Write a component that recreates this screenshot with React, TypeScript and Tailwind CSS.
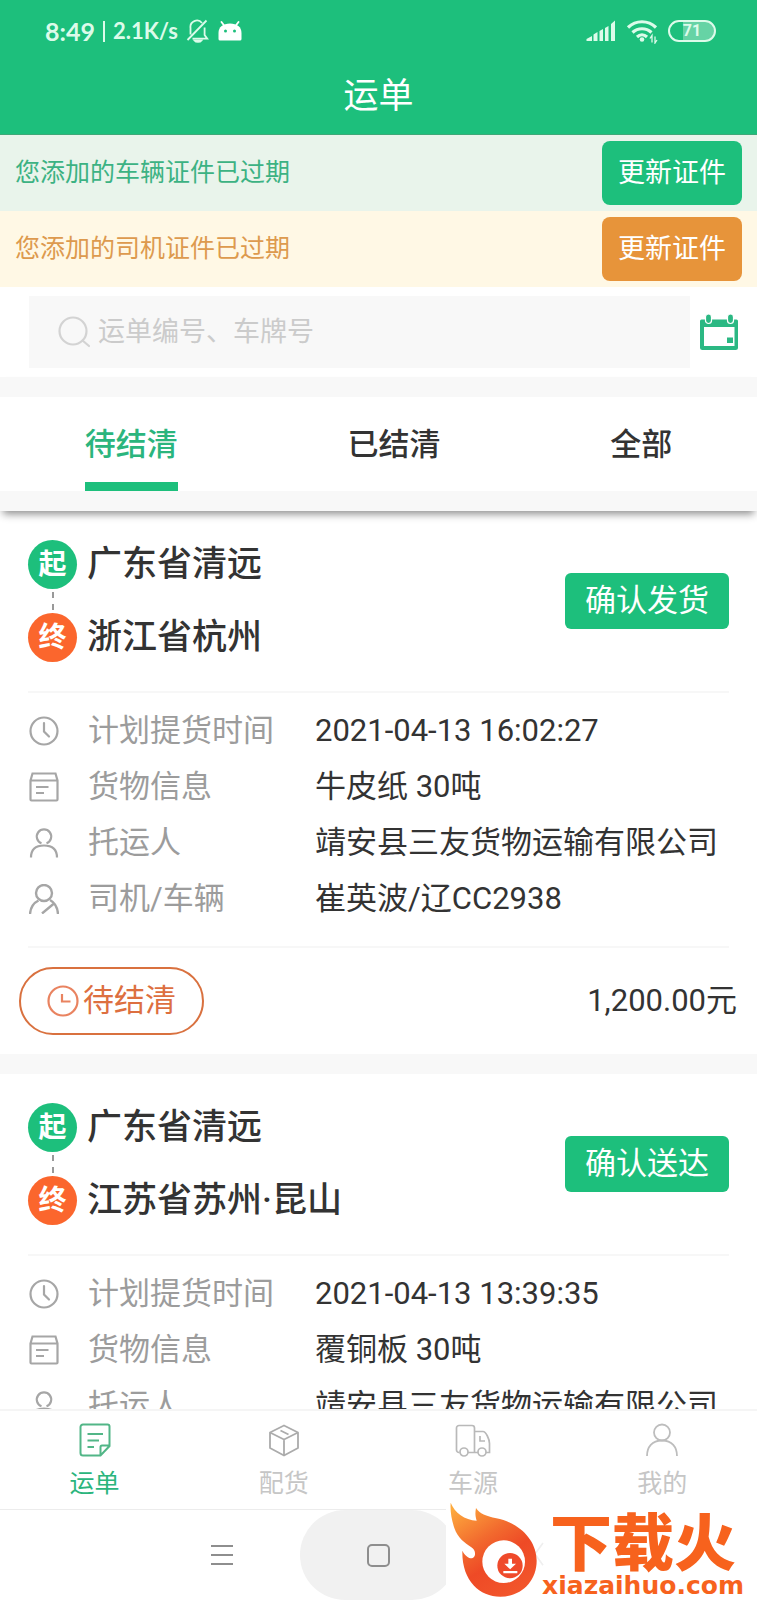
import { useState } from 'react';
import type { ReactNode } from 'react';

interface Waybill {
  id: number;
  from: string;
  to: string;
  action: string;
  pickupTime: string;
  cargo: string;
  shipper: string;
  driver?: string;
  status?: string;
  price?: string;
}

const waybills: Waybill[] = [
  {
    id: 1,
    from: '广东省清远',
    to: '浙江省杭州',
    action: '确认发货',
    pickupTime: '2021-04-13 16:02:27',
    cargo: '牛皮纸 30吨',
    shipper: '靖安县三友货物运输有限公司',
    driver: '崔英波/辽CC2938',
    status: '待结清',
    price: '1,200.00元',
  },
  {
    id: 2,
    from: '广东省清远',
    to: '江苏省苏州·昆山',
    action: '确认送达',
    pickupTime: '2021-04-13 13:39:35',
    cargo: '覆铜板 30吨',
    shipper: '靖安县三友货物运输有限公司',
  },
];

const tabs = ['待结清', '已结清', '全部'];

/* ---------- icons ---------- */

function MuteIcon() {
  return (
    <svg width="24" height="24" viewBox="0 0 24 24" fill="none" stroke="currentColor" strokeWidth="1.8">
      <path d="M4.500 15.500V9A6.500 6.500 0 0 1 16 4M18.600 8.500V16l2.600 3.600H6.500M1.500 21 20.500 1.500" />
      <path d="M8.500 21.400c1.500 2 5.500 2 7 0z" fill="currentColor" />
    </svg>
  );
}

function AndroidIcon() {
  return (
    <svg width="24" height="20" viewBox="0 0 24 20" fill="#fff">
      <path d="M.5 18v-6C.5 6 5 2.500 12 2.500S23.500 6 23.500 12v6a1.500 1.500 0 0 1-1.500 1.500H2A1.500 1.500 0 0 1 .5 18z" />
      <path d="M6.500 5 3.500 1M17.500 5l3-4" stroke="#fff" strokeWidth="1.800" strokeLinecap="round" />
      <circle cx="7.500" cy="10" r="1.500" fill="#1dbf7c" />
      <circle cx="16.500" cy="10" r="1.500" fill="#1dbf7c" />
    </svg>
  );
}

function SignalIcon() {
  return (
    <svg width="30" height="22" viewBox="0 0 30 22" fill="currentColor">
      <path d="M.5 21v-2L6 16v5zM7.500 21v-6.500l4-2.500v9zM13.500 21V11l3.500-2v12zM19 21V8l3.500-2v15zM25 21V4l4-3.500V21z" />
    </svg>
  );
}

function WifiIcon() {
  return (
    <svg width="32" height="25" viewBox="0 0 32 25" fill="none" stroke="currentColor" strokeWidth="3.200">
      <path d="M2 8.500C10 .8 22 .8 30 8.500" />
      <path d="M6.500 13.500c5.500-5 13.500-5 19 0" />
      <path d="M11 18c3-2.800 7-2.800 10 0" />
      <circle cx="16" cy="20.500" r="2.300" fill="currentColor" stroke="none" />
      <path d="M26 23.500v-7l-2 3M29 17.500v6.500l2-3" strokeWidth="1.300" />
    </svg>
  );
}

function SearchIcon() {
  return (
    <svg width="32" height="32" viewBox="0 0 32 32" fill="none" stroke="#d3d3d3" strokeWidth="2.200">
      <circle cx="15" cy="15" r="13.500" />
      <path d="M24.500 24.500 31 30" strokeLinecap="round" />
    </svg>
  );
}

function CalendarIcon() {
  return (
    <svg width="40" height="38" viewBox="0 0 40 38" fill="none">
      <path
        d="M2.500 6.500h35A1.500 1.500 0 0 1 39 8v26.500a2.500 2.500 0 0 1-2.500 2.500h-33A2.500 2.500 0 0 1 1 34.500V8a1.500 1.500 0 0 1 1.500-1.500zM5 14v19h30.500V14z"
        fill="#2bb883"
        fillRule="evenodd"
      />
      <rect x="6.500" y="1" width="6" height="9.500" rx="3" fill="#2bb883" stroke="#fff" strokeWidth="1.200" />
      <rect x="28.500" y="1" width="6" height="9.500" rx="3" fill="#2bb883" stroke="#fff" strokeWidth="1.200" />
      <rect x="28" y="24.500" width="6" height="5.500" fill="#2bb883" />
    </svg>
  );
}

function ClockIcon() {
  return (
    <svg width="30" height="30" viewBox="0 0 30 30" fill="none" stroke="#a6a6a6" strokeWidth="2.200">
      <circle cx="15" cy="15" r="13.500" />
      <path d="M15 7v8.500l5 5" strokeLinecap="round" />
    </svg>
  );
}

function CargoIcon() {
  return (
    <svg width="30" height="30" viewBox="0 0 30 30" fill="none" stroke="#a6a6a6" strokeWidth="2.200">
      <path d="M1.500 8.500 3.500 1.500h23l2 7v19a1 1 0 0 1-1 1h-25a1 1 0 0 1-1-1zM1.500 8.500h27M7 15h12.500M7 21h8" />
    </svg>
  );
}

function PersonIcon() {
  return (
    <svg width="30" height="30" viewBox="0 0 30 30" fill="none" stroke="#a6a6a6" strokeWidth="2.200">
      <path d="M12.500 15.300a7.200 7.200 0 1 1 5 0" />
      <path d="M2 29.500c0-8 5-12 13-12s13 4 13 12" />
    </svg>
  );
}

function DriverIcon() {
  return (
    <svg width="30" height="30" viewBox="0 0 30 30" fill="none" stroke="#a6a6a6" strokeWidth="2.400">
      <circle cx="15" cy="9" r="8" />
      <path d="M1 30c.5-6.500 3.500-11 8.500-13.500M21 16c4.500 2.500 7.500 7 8 14M13 29.500l12-10" />
    </svg>
  );
}

function StatusClockIcon() {
  return (
    <svg width="32" height="32" viewBox="0 0 32 32" fill="none" stroke="#e98360" strokeWidth="2.200">
      <circle cx="16" cy="16" r="14.500" />
      <path d="M15 9v7.500h8.500" />
    </svg>
  );
}

function NoteIcon() {
  return (
    <svg width="32" height="34" viewBox="0 0 32 34" fill="none" stroke="#52b687" strokeWidth="2">
      <path d="M4 1.500h24.500a2 2 0 0 1 2 2V23l-9 9.500H4a2.500 2.500 0 0 1-2.500-2.500V4A2.500 2.500 0 0 1 4 1.500zM30.500 22.500H23a1.500 1.500 0 0 0-1.500 1.500v8.500M8.500 11H24M8.500 17.500H20M8.500 24H15" />
    </svg>
  );
}

function BoxIcon() {
  return (
    <svg width="32" height="34" viewBox="0 0 32 34" fill="none" stroke="#ababab" strokeWidth="1.800" strokeLinejoin="round">
      <path d="M16 2.500 30 9.500v15.500l-14 7.500L2 25V9.500zM2 9.500l14 7 14-7M16 16.500v16M12.500 7.500l8 4" />
    </svg>
  );
}

function TruckIcon() {
  return (
    <svg width="36" height="34" viewBox="0 0 36 34" fill="none" stroke="#b9b9b9" strokeWidth="1.700">
      <path d="M4.500 29.500H4A2.500 2.500 0 0 1 1.500 27V5A2.500 2.500 0 0 1 4 2.500h13A2.500 2.500 0 0 1 19.500 5v24.500H13M19.500 8.500h8.500c3 0 6.500 8 6.500 12v9h-3.500M19.500 29.500H23M25 13v5h5" />
      <circle cx="9" cy="29" r="4" />
      <circle cx="27" cy="29" r="4" />
    </svg>
  );
}

function MineIcon() {
  return (
    <svg width="32" height="34" viewBox="0 0 32 34" fill="none" stroke="#bdbdbd" strokeWidth="1.800">
      <circle cx="16" cy="9.500" r="8" />
      <path d="M1 33c0-9 5-15.500 15-15.500S31 24 31 33" />
    </svg>
  );
}

function FlameLogo() {
  return (
    <svg className="shrink-0 overflow-visible" width="92" height="98" viewBox="0 0 276 294" fill="none">
      <defs>
        <linearGradient id="flame" x1="20" y1="20" x2="190" y2="280" gradientUnits="userSpaceOnUse">
          <stop offset="0" stopColor="#fdaa3d" />
          <stop offset="0.400" stopColor="#f26a2e" />
          <stop offset="0.650" stopColor="#ee4a26" />
          <stop offset="1" stopColor="#f2552b" />
        </linearGradient>
      </defs>
      <path d="M291 123 267 156l24 34" stroke="#efefef" strokeWidth="5" />
      <path
        d="M14 2C26 32 56 54 92 56C88 44 87 34 90 18C101 36 120 42 151 49C220 62 272 114 272 176C272 238 225 284 163 284C100 284 47 236 49 146C56 160 70 172 80 168C92 160 88 144 76 136C56 122 35 108 25 78C17 54 12 28 14 2Z"
        fill="url(#flame)"
      />
      <circle cx="173" cy="179" r="64" fill="#fff" />
      <circle cx="192" cy="191" r="38" fill="#ef4a2b" />
      <path d="M187 170h11v15h12l-17.500 17L175 185h12zM172 207h42v7h-42z" fill="#fff" />
    </svg>
  );
}

/* ---------- parts ---------- */

interface NoticeProps {
  text: string;
  tone: 'green' | 'orange';
}

function Notice({ text, tone }: NoticeProps) {
  const barColor = tone === 'green' ? 'bg-[#e9f4eb] text-[#3cb283]' : 'bg-[#fff8e5] text-[#dd9a4e]';
  const buttonColor = tone === 'green' ? 'bg-[#1dbf7c]' : 'bg-[#e7943a]';

  return (
    <div className={`flex h-[76px] items-center justify-between px-[15px] ${barColor}`}>
      <p className="text-[25px] leading-8">{text}</p>
      <button className={`h-16 rounded-lg px-4 text-[27px] leading-8 text-white ${buttonColor}`}>更新证件</button>
    </div>
  );
}

interface DetailProps {
  icon: ReactNode;
  label: string;
  value: string;
}

function Detail({ icon, label, value }: DetailProps) {
  return (
    <div className="flex h-14 items-center pl-px">
      {icon}
      <dt className="ml-[29px] w-[227px] shrink-0 text-[#9c9c9c]">{label}</dt>
      <dd className="whitespace-nowrap text-[#333]">{value}</dd>
    </div>
  );
}

function WaybillCard({ bill }: { bill: Waybill }) {
  return (
    <article className="mb-5 bg-white">
      <div className="mx-7 flex items-center justify-between border-b-2 border-[#f7f7f7] py-[29px]">
        <div className="text-[35px] font-medium text-[#333]">
          <div className="flex items-center gap-[10px]">
            <span className="flex size-[49px] items-center justify-center rounded-full bg-[#1dbf7c] text-[28px] font-bold leading-8 text-white">
              起
            </span>
            <span className="leading-[49px]">{bill.from}</span>
          </div>
          <div className="flex h-6 w-[49px] flex-col items-center justify-center gap-[6px]">
            <i className="h-[6px] w-[2px] bg-[#999]" />
            <i className="h-[6px] w-[2px] bg-[#999]" />
          </div>
          <div className="flex items-center gap-[10px]">
            <span className="flex size-[49px] items-center justify-center rounded-full bg-[#fb662d] text-[28px] font-bold leading-8 text-white">
              终
            </span>
            <span className="leading-[49px]">{bill.to}</span>
          </div>
        </div>
        <button className="h-14 rounded-md bg-[#1dbf7c] px-5 text-[31px] leading-8 text-white">{bill.action}</button>
      </div>
      <dl className="mx-7 border-b-2 border-[#f7f7f7] pb-[19px] pt-[10px] text-[31px] leading-10">
        <Detail icon={<ClockIcon />} label="计划提货时间" value={bill.pickupTime} />
        <Detail icon={<CargoIcon />} label="货物信息" value={bill.cargo} />
        <Detail icon={<PersonIcon />} label="托运人" value={bill.shipper} />
        {bill.driver && <Detail icon={<DriverIcon />} label="司机/车辆" value={bill.driver} />}
      </dl>
      {bill.status && (
        <div className="flex h-[106px] items-center justify-between pl-[19px] pr-5 text-[31px] leading-10">
          <span className="flex h-[68px] items-center gap-1 rounded-full border-2 border-[#d9713f] px-[26px] text-[#dd6f40]">
            <StatusClockIcon />
            {bill.status}
          </span>
          <span className="text-[#333]">{bill.price}</span>
        </div>
      )}
    </article>
  );
}

interface NavItemProps {
  icon: ReactNode;
  label: string;
  active?: boolean;
}

function NavItem({ icon, label, active = false }: NavItemProps) {
  return (
    <a
      href="#"
      className={`flex flex-1 flex-col items-center gap-[9px] pt-3 text-[25px] leading-9 ${active ? 'text-[#2bb57d]' : 'text-[#c6c6c6]'}`}
    >
      {icon}
      {label}
    </a>
  );
}

export default function App() {
  const [activeTab, setActiveTab] = useState('待结清');

  return (
    <div className="relative flex h-screen flex-col overflow-hidden bg-[#f8f8f8] font-['Roboto','Noto_Sans_CJK_SC',sans-serif]">
      <header className="border-b border-[#3fa878] bg-[#1dbf7c] pb-0.5 text-white">
        <div className="flex h-[62px] items-center justify-between pl-[45px] pr-[41px] text-[#dcfbea]">
          <div className="flex items-center gap-2 font-['Lato',sans-serif] text-[22px] font-bold leading-8">
            <span className="text-[25px]">8:49</span>
            <i className="h-[21px] w-[2px] bg-[#dcfbea]" />
            <span>2.1K/s</span>
            <MuteIcon />
            <AndroidIcon />
          </div>
          <div className="flex items-center gap-[10px]">
            <SignalIcon />
            <WifiIcon />
            <span className="flex h-[22px] w-12 items-center justify-center rounded-full border-2 border-[#dcfbea] bg-gradient-to-r from-transparent from-30% to-[#66d3a5] to-30% text-[16px] font-bold leading-4">
              71
            </span>
          </div>
        </div>
        <h1 className="text-center text-[35px] leading-[70px]">运单</h1>
      </header>

      <Notice text="您添加的车辆证件已过期" tone="green" />
      <Notice text="您添加的司机证件已过期" tone="orange" />

      <div className="flex items-center bg-white py-[9px] pl-[29px] pr-[18px]">
        <label className="flex h-[72px] flex-1 items-center gap-2 bg-[#f8f8f8] pl-[29px]">
          <SearchIcon />
          <input
            type="text"
            aria-label="搜索运单"
            placeholder="运单编号、车牌号"
            className="h-12 min-w-0 flex-1 bg-transparent text-[27px] outline-none placeholder:text-[#cbcbcb]"
          />
        </label>
        <button aria-label="选择日期" className="ml-[9px]">
          <CalendarIcon />
        </button>
      </div>

      <div className="relative z-10 border-y-[20px] border-[#f8f8f8] bg-white shadow-[0_6px_8px_-3px_rgba(0,0,0,0.45)]">
        <div className="flex h-[94px] justify-around">
          {tabs.map((tab) => (
            <button
              key={tab}
              onClick={() => setActiveTab(tab)}
              className={`border-b-[9px] pt-[11px] text-[31px] font-medium leading-10 ${
                tab === activeTab ? 'border-[#1dbf7c] text-[#2bb57d]' : 'border-transparent text-[#333]'
              }`}
            >
              {tab}
            </button>
          ))}
        </div>
      </div>

      <main className="min-h-0 flex-1 overflow-hidden">
        {waybills.map((bill) => (
          <WaybillCard key={bill.id} bill={bill} />
        ))}
      </main>

      <nav className="flex h-[100px] shrink-0 border-t-2 border-[#f5f5f5] bg-white">
        <NavItem icon={<NoteIcon />} label="运单" active />
        <NavItem icon={<BoxIcon />} label="配货" />
        <NavItem icon={<TruckIcon />} label="车源" />
        <NavItem icon={<MineIcon />} label="我的" />
      </nav>

      <div className="flex h-[91px] shrink-0 items-center justify-center border-t border-[#ececec] bg-white">
        <button aria-label="菜单" className="flex h-full w-[157px] items-center justify-center">
          <svg width="22" height="20" viewBox="0 0 22 20" stroke="#8e8e8e" strokeWidth="2">
            <path d="M0 1h22M0 10h22M0 19h22" />
          </svg>
        </button>
        <button aria-label="主页" className="flex h-full w-[157px] items-center justify-center rounded-full bg-[#f1f1f1]">
          <i className="size-[23px] rounded-[5px] border-2 border-[#8e8e8e]" />
        </button>
        <button aria-label="返回" className="h-full w-[157px]" />
      </div>

      <div className="absolute bottom-0 right-0 z-20 flex h-[98px] w-[311px] bg-white pr-[9px] text-[#f7621d]">
        <FlameLogo />
        <div className="flex flex-1 flex-col items-center gap-1 pt-1">
          <p className="whitespace-nowrap font-['Noto_Sans_CJK_SC',sans-serif] text-[62px] font-black leading-[66px]">下载火</p>
          <p className="whitespace-nowrap font-['DejaVu_Sans',sans-serif] text-[25px] font-bold leading-5">xiazaihuo.com</p>
        </div>
      </div>
    </div>
  );
}
